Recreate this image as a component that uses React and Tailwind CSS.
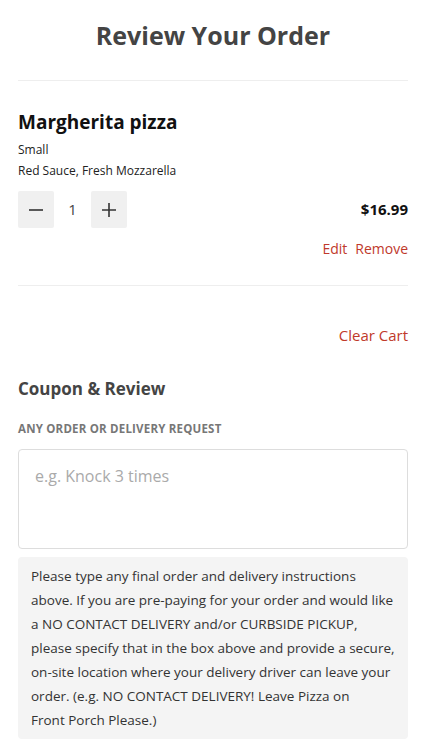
import React from 'react';

const font = { fontFamily: '"Open Sans", "Noto Sans", sans-serif' };

const App = () => {
  return (
    <div className="bg-white min-h-screen pl-[18px] pr-[14px] text-[#222]" style={font}>
      <h1 className="text-[25px] font-bold text-center text-[#444] pt-[17px] pb-[27px] leading-[36px]">
        Review Your Order
      </h1>
      <div className="border-t border-[#eee]" />

      {/* cart item */}
      <div className="pt-[28px] pb-[26px]">
        <h2 className="text-[19px] font-bold text-[#111] leading-[26px]">Margherita pizza</h2>
        <p className="text-[12px] mt-[7px] leading-[16px]">Small</p>
        <p className="text-[12px] mt-[5px] leading-[16px]">Red Sauce, Fresh Mozzarella</p>
        <div className="flex items-center justify-between mt-[12px]">
          <div className="flex items-center">
            <button className="w-[36px] h-[37px] bg-[#f0f0f0] rounded-[2px] flex items-center justify-center">
              <svg width="16" height="16" viewBox="0 0 16 16"><path d="M1 8h14" stroke="#333" strokeWidth="1.6" /></svg>
            </button>
            <span className="w-[37px] text-center text-[15px] text-[#444]">1</span>
            <button className="w-[36px] h-[37px] bg-[#f0f0f0] rounded-[2px] flex items-center justify-center">
              <svg width="16" height="16" viewBox="0 0 16 16"><path d="M1 8h14M8 1v14" stroke="#333" strokeWidth="1.6" /></svg>
            </button>
          </div>
          <span className="text-[15px] font-bold text-[#111]">$16.99</span>
        </div>
        <div className="flex justify-end gap-[8px] mt-[10px] text-[14px] text-[#c0392b]">
          <span>Edit</span>
          <span>Remove</span>
        </div>
      </div>
      <div className="border-t border-[#eee]" />

      <div className="flex justify-end pt-[38px] text-[15px] text-[#c0392b] leading-[22px]">
        <span>Clear Cart</span>
      </div>

      <h3 className="text-[17px] font-bold text-[#444] mt-[31px] leading-[24px]">Coupon &amp; Review</h3>
      <p className="text-[11.5px] font-bold text-[#777] uppercase mt-[20px] leading-[16px] tracking-[0.2px]">
        Any order or delivery request
      </p>
      <textarea
        className="block w-full h-[100px] mt-[12px] border border-[#ddd] rounded-[4px] px-[16px] pt-[14px] text-[16px] resize-none placeholder:text-[#aaa] outline-none"
        placeholder="e.g. Knock 3 times"
        style={font}
      />
      <div className="bg-[#f4f4f4] rounded-[4px] mt-[8px] px-[13px] py-[7px] text-[13.5px] leading-[24px] text-[#333]">
        Please type any final order and delivery instructions above. If you are pre-paying for your order and would like a NO CONTACT DELIVERY and/or CURBSIDE PICKUP, please specify that in the box above and provide a secure, on-site location where your delivery driver can leave your order. (e.g. NO CONTACT DELIVERY! Leave Pizza on {'Front\u00a0Porch\u00a0Please.)'}
      </div>
    </div>
  );
};

export default App;
